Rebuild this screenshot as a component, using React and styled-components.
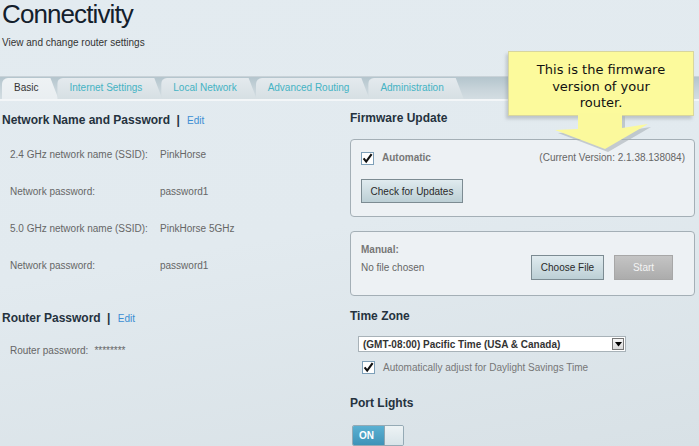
import React from 'react';
import styled, { createGlobalStyle } from 'styled-components';

const GlobalStyle = createGlobalStyle`
  html, body {
    margin: 0;
    padding: 0;
  }
  body {
    font-family: "Liberation Sans", Arial, sans-serif;
    background: #dfe7ec;
  }
`;

const tabs = ['Basic', 'Internet Settings', 'Local Network', 'Advanced Routing', 'Administration'];

const networkRows = [
    { label: '2.4 GHz network name (SSID):', value: 'PinkHorse' },
    { label: 'Network password:', value: 'password1' },
    { label: '5.0 GHz network name (SSID):', value: 'PinkHorse 5GHz' },
    { label: 'Network password:', value: 'password1' },
];

function CheckBox() {
    return (
        <CheckIcon width="13" height="13" viewBox="0 0 13 13">
            <rect x="0.5" y="0.5" width="12" height="12" fill="#fff" stroke="#7d9fb8" />
            <path d="M2.6 6.4 L5.2 9.6 L10.6 2.2" fill="none" stroke="#111" strokeWidth="2.1" />
        </CheckIcon>
    );
}

function App() {
    return (
        <Page>
            <GlobalStyle />
            <Header>
                <Title>Connectivity</Title>
                <Subtitle>View and change router settings</Subtitle>
            </Header>

            <TabBar>
                {tabs.map((t, i) => (
                    <Tab key={t} active={i === 0}>{t}</Tab>
                ))}
            </TabBar>

            <Columns>
                <LeftCol>
                    <Heading>
                        Network Name and Password <Sep>|</Sep> <EditLink>Edit</EditLink>
                    </Heading>
                    <RowList>
                        {networkRows.map((r, i) => (
                            <InfoRow key={i}>
                                <span>{r.label}</span>
                                <span>{r.value}</span>
                            </InfoRow>
                        ))}
                    </RowList>

                    <Heading top={37}>
                        Router Password <Sep>|</Sep> <EditLink>Edit</EditLink>
                    </Heading>
                    <InlineRow>
                        <span>Router password:</span>
                        <span>********</span>
                    </InlineRow>
                </LeftCol>

                <RightCol>
                    <Heading>Firmware Update</Heading>
                    <Box top={13} height={78}>
                        <BoxLine>
                            <CheckLabel>
                                <CheckBox />
                                <Strong>Automatic</Strong>
                            </CheckLabel>
                            <Muted>(Current Version: 2.1.38.138084)</Muted>
                        </BoxLine>
                        <Button width={102} height={24} top={14}>Check for Updates</Button>
                    </Box>

                    <Box top={14} height={65}>
                        <ManualRow>
                            <ManualText>
                                <Strong>Manual:</Strong>
                                <Muted>No file chosen</Muted>
                            </ManualText>
                            <ButtonGroup>
                                <Button width={73} height={25}>Choose File</Button>
                                <Button width={59} height={25} disabled>Start</Button>
                            </ButtonGroup>
                        </ManualRow>
                    </Box>

                    <Heading top={12}>Time Zone</Heading>
                    <Select>
                        <span>(GMT-08:00) Pacific Time (USA &amp; Canada)</span>
                        <SelectArrow>
                            <svg width="7" height="5" viewBox="0 0 7 5">
                                <path d="M0 0 H7 L3.5 4.5 Z" fill="#000" />
                            </svg>
                        </SelectArrow>
                    </Select>
                    <DstRow>
                        <CheckBox />
                        <span>Automatically adjust for Daylight Savings Time</span>
                    </DstRow>

                    <Heading top={21}>Port Lights</Heading>
                    <Toggle>
                        <ToggleOn>ON</ToggleOn>
                        <ToggleKnob />
                    </Toggle>
                </RightCol>
            </Columns>

            <Callout>
                This is the firmware<br />version of your<br />router.
            </Callout>
            <CalloutArrow width="110" height="45" viewBox="550 112 110 45">
                <polygon
                    points="581,116 625,116 625,131 651,127 608,152 558,133 581,132"
                    fill="#a9b0b6"
                    opacity="0.6"
                />
                <polygon
                    points="578,113 622,113 622,128 648,124 605,149 555,130 578,129"
                    fill="#fbf99c"
                />
            </CalloutArrow>
        </Page>
    );
}

const Page = styled.div`
    position: relative;
    width: 699px;
    height: 446px;
    overflow: hidden;
    background: linear-gradient(170deg, #e3ebf0 0%, #e2eaef 50%, #d8e1e6 100%);
    color: #333;
`;

const Header = styled.div`
    padding-left: 2px;
`;

const Title = styled.h1`
    margin: 0;
    font-weight: normal;
    font-size: 26px;
    letter-spacing: -0.9px;
    line-height: 28px;
    color: #13202c;
`;

const Subtitle = styled.div`
    margin-top: 8px;
    font-size: 10px;
    line-height: 14px;
    color: #333;
`;

const TabBar = styled.div`
    display: flex;
    align-items: flex-end;
    margin-top: 26px;
    height: 21px;
    padding: 1px 0 0 2px;
    border-top: 1px solid #c9d2d8;
    border-bottom: 2px solid #f3f6f8;
    background: linear-gradient(#b4c5cd, #c9d5db 60%, #d3dde2);
`;

const Tab = styled.div`
    height: 21px;
    line-height: 20px;
    padding: 0 20px 0 12px;
    margin-right: -1px;
    font-size: 10px;
    color: ${(p) => (p.active ? '#333' : '#45b3c4')};
    background: ${(p) =>
        p.active
            ? 'linear-gradient(#eef2f4, #e9eef1)'
            : 'linear-gradient(#e4eaee, #d6dfe3)'};
    border-top-left-radius: 6px;
    clip-path: polygon(0 0, calc(100% - 8px) 0, 100% 100%, 0 100%);
`;

const Columns = styled.div`
    display: grid;
    grid-template-columns: 348px 345px;
    padding-left: 2px;
`;

const LeftCol = styled.div`
    padding-top: 11px;
`;

const RightCol = styled.div`
    padding-top: 9px;
`;

const Heading = styled.div`
    margin-top: ${(p) => p.top || 0}px;
    font-size: 12px;
    line-height: 16px;
    font-weight: bold;
    color: #25323e;
`;

const Sep = styled.span`
    margin: 0 4px 0 3px;
    font-weight: bold;
`;

const EditLink = styled.span`
    font-size: 10px;
    font-weight: normal;
    color: #3b8ed3;
`;

const RowList = styled.div`
    display: flex;
    flex-direction: column;
    gap: 23px;
    padding-top: 19px;
`;

const InfoRow = styled.div`
    display: grid;
    grid-template-columns: 150px 1fr;
    padding-left: 8px;
    font-size: 10px;
    line-height: 14px;
    color: #666;
`;

const InlineRow = styled.div`
    display: flex;
    gap: 6px;
    margin-top: 17px;
    padding-left: 8px;
    font-size: 10px;
    line-height: 14px;
    color: #666;
`;

const Box = styled.div`
    box-sizing: border-box;
    margin-top: ${(p) => p.top}px;
    height: ${(p) => p.height}px;
    width: 345px;
    padding: 11px 9px 0 10px;
    border: 1px solid #a4afb6;
    border-radius: 4px;
    background: #edf1f4;
`;

const BoxLine = styled.div`
    display: flex;
    justify-content: space-between;
    align-items: center;
    height: 14px;
    font-size: 10px;
`;

const CheckLabel = styled.label`
    display: flex;
    align-items: center;
    gap: 8px;
`;

const CheckIcon = styled.svg`
    display: block;
    flex: none;
`;

const Strong = styled.span`
    font-size: 10px;
    line-height: 14px;
    font-weight: bold;
    color: #777;
`;

const Muted = styled.span`
    font-size: 10px;
    line-height: 14px;
    color: #666;
`;

const Button = styled.button`
    display: block;
    box-sizing: border-box;
    width: ${(p) => p.width}px;
    height: ${(p) => p.height}px;
    margin-top: ${(p) => p.top || 0}px;
    padding: 0;
    font-family: "Liberation Sans", Arial, sans-serif;
    font-size: 10px;
    color: #2a2a2a;
    border: 1px solid #7c8b92;
    background: linear-gradient(#e0ebef, #bccfd5);
    cursor: pointer;

    &:disabled {
        color: #f4f4f4;
        border-color: #a7a7a7;
        background: linear-gradient(#c4c4c4, #acacac);
        cursor: default;
    }
`;

const ManualRow = styled.div`
    display: flex;
    justify-content: space-between;
    align-items: flex-start;
    padding-right: 12px;
`;

const ManualText = styled.div`
    display: flex;
    flex-direction: column;
    gap: 4px;
`;

const ButtonGroup = styled.div`
    display: flex;
    gap: 10px;
    margin-top: 12px;
`;

const Select = styled.div`
    box-sizing: border-box;
    display: flex;
    align-items: center;
    justify-content: space-between;
    width: 268px;
    height: 16px;
    margin: 12px 0 0 8px;
    padding: 0 1px 0 4px;
    background: #fff;
    border: 1px solid #a8b2b8;
    font-size: 10px;
    font-weight: bold;
    color: #333;
`;

const SelectArrow = styled.span`
    display: flex;
    align-items: center;
    justify-content: center;
    width: 12px;
    height: 12px;
    box-sizing: border-box;
    border: 1px solid #777;
    background: linear-gradient(#f6f6f6, #d9d9d9);
`;

const DstRow = styled.label`
    display: flex;
    align-items: center;
    gap: 8px;
    margin: 9px 0 0 12px;
    font-size: 10px;
    line-height: 13px;
    color: #777;
`;

const Toggle = styled.div`
    display: flex;
    width: 52px;
    height: 21px;
    margin: 14px 0 0 2px;
    border-radius: 2px;
    overflow: hidden;
    border: 1px solid #95aab5;
    box-sizing: border-box;
`;

const ToggleOn = styled.div`
    width: 31px;
    padding-left: 6px;
    box-sizing: border-box;
    line-height: 19px;
    font-size: 10px;
    font-weight: bold;
    color: #fff;
    background: linear-gradient(#5ab0d2, #3e93b8);
`;

const ToggleKnob = styled.div`
    flex: 1;
    background: linear-gradient(#edf3f5, #d8e4e9);
    border-left: 1px solid #8fa6b1;
`;

const Callout = styled.div`
    position: absolute;
    left: 508px;
    top: 51px;
    box-sizing: border-box;
    width: 186px;
    height: 65px;
    padding-top: 10px;
    text-align: center;
    font-family: "DejaVu Sans", Verdana, sans-serif;
    font-size: 13px;
    line-height: 16.5px;
    color: #111;
    background: #fcfa9c;
    border: 1px solid #d8d69e;
    box-shadow: -2px 3px 3px rgba(120, 128, 135, 0.35);
`;

const CalloutArrow = styled.svg`
    position: absolute;
    left: 550px;
    top: 112px;
`;

export default App;
